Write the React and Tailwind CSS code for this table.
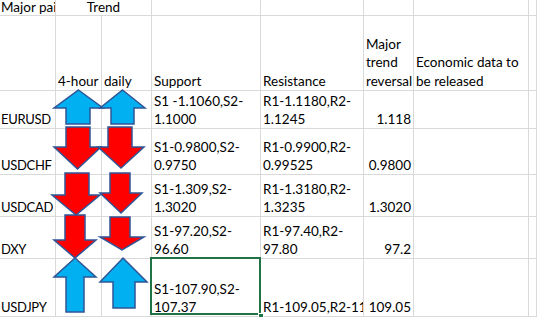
import React from "react";

const G = "border-r border-b border-[#d9d9d9]";
const cell = `${G} flex items-end overflow-hidden px-[2px] leading-[18px]`;

function Up({ tx, ty, hl, hr, hb, sl, sr, b }) {
  const pts = `${tx},${ty} ${hr},${hb} ${sr},${hb} ${sr},${b} ${sl},${b} ${sl},${hb} ${hl},${hb}`;
  return <polygon points={pts} fill="#00b0f0" stroke="#2f5597" strokeWidth="1.5" strokeLinejoin="miter" />;
}
function Down({ tx, ty, hl, hr, ht, sl, sr, t }) {
  const pts = `${sl},${t} ${sr},${t} ${sr},${ht} ${hr},${ht} ${tx},${ty} ${hl},${ht} ${sl},${ht}`;
  return <polygon points={pts} fill="#ff0000" stroke="#2f5597" strokeWidth="1.5" strokeLinejoin="miter" />;
}

const rows = [
  { pair: "EURUSD", s: ["S1 -1.1060,S2-", "1.1000"], r: ["R1-1.1180,R2-", "1.1245"], m: "1.118" },
  { pair: "USDCHF", s: ["S1-0.9800,S2-", "0.9750"], r: ["R1-0.9900,R2-", "0.99525"], m: "0.9800" },
  { pair: "USDCAD", s: ["S1-1.309,S2-", "1.3020"], r: ["R1-1.3180,R2-", "1.3235"], m: "1.3020" },
  { pair: "DXY", s: ["S1-97.20,S2-", "96.60"], r: ["R1-97.40,R2-", "97.80"], m: "97.2" },
];

export default function App() {
  return (
    <div
      className="relative w-[537px] h-[317px] overflow-hidden bg-white text-black text-[13.5px]"
      style={{ fontFamily: "Lato, 'Liberation Sans', sans-serif" }}
    >
      <div className="grid grid-cols-[56px_46px_50px_109px_103px_50px_115px_1fr] grid-rows-[16px_75px_38px_46px_42px_42px_58px]">
        {/* row 0 */}
        <div className={`${cell} !leading-[15px] !pl-[1px] whitespace-nowrap`}>Major pair</div>
        <div className={`${cell} col-span-2 justify-center !leading-[15px]`}>Trend</div>
        <div className={cell}></div>
        <div className={cell}></div>
        <div className={cell}></div>
        <div className={cell}></div>
        <div className={cell}></div>

        {/* row 1 */}
        <div className={cell}></div>
        <div className={cell}>4-hour</div>
        <div className={cell}>daily</div>
        <div className={cell}>Support</div>
        <div className={cell}>Resistance</div>
        <div className={`${cell} !leading-[18.5px] whitespace-nowrap`}>
          <div>Major<br />trend<br />reversal</div>
        </div>
        <div className={`${cell} !leading-[18.5px]`}>
          <div>Economic data to<br />be released</div>
        </div>
        <div className={cell}></div>

        {rows.map((r) => (
          <React.Fragment key={r.pair}>
            <div className={`${cell} !pl-[1px] text-[13px] tracking-[-0.3px]`}>{r.pair}</div>
            <div className={cell}></div>
            <div className={cell}></div>
            <div className={`${cell} whitespace-nowrap`}>
              <div>{r.s[0]}<br />{r.s[1]}</div>
            </div>
            <div className={`${cell} whitespace-nowrap`}>
              <div>{r.r[0]}<br />{r.r[1]}</div>
            </div>
            <div className={`${cell} justify-end`}>{r.m}</div>
            <div className={cell}></div>
            <div className={cell}></div>
          </React.Fragment>
        ))}

        {/* USDJPY */}
        <div className={`${cell} !pl-[1px] text-[13px] tracking-[-0.3px]`}>USDJPY</div>
        <div className={cell}></div>
        <div className={cell}></div>
        <div className={`${G} relative flex items-end px-[2px] leading-[18px] whitespace-nowrap`}>
          <div>S1-107.90,S2-<br />107.37</div>
          <div className="absolute z-10 left-[-2px] top-[-2px] w-[111px] h-[58px] border-2 border-[#217346]"></div>
          <div className="absolute z-20 right-[-4px] bottom-[-3px] w-[6px] h-[6px] bg-[#217346] border border-white"></div>
        </div>
        <div className={cell}>
          <div className="whitespace-nowrap">R1-109.05,R2-110.25</div>
        </div>
        <div className={`${cell} justify-end`}>109.05</div>
        <div className={cell}></div>
        <div className={cell}></div>
      </div>

      <svg className="absolute left-0 top-0 z-30 pointer-events-none" width="537" height="317" viewBox="0 0 537 317">
        <Up tx={78.5} ty={90} hl={54} hr={103} hb={108} sl={66} sr={90} b={124} />
        <Up tx={122.5} ty={90} hl={100} hr={145} hb={108} sl={111} sr={134} b={124} />
        <Down t={127} sl={66} sr={90} ht={147} hl={54} hr={101} tx={77.5} ty={169} />
        <Down t={127} sl={108} sr={132} ht={147} hl={98} hr={144} tx={121} ty={168} />
        <Down t={173} sl={65} sr={89} ht={195} hl={52} hr={100} tx={76} ty={215} />
        <Down t={173} sl={110} sr={130} ht={193} hl={100} hr={142} tx={121} ty={213} />
        <Down t={215} sl={65} sr={85} ht={240} hl={54} hr={96} tx={75} ty={258} />
        <Down t={217} sl={110} sr={130} ht={237} hl={100} hr={144} tx={122} ty={250} />
        <Up tx={75} ty={258} hl={54} hr={96} hb={277} sl={66} sr={84} b={312} />
        <Up tx={123} ty={258} hl={100} hr={147} hb={282} sl={113} sr={135} b={308} />
      </svg>
    </div>
  );
}
